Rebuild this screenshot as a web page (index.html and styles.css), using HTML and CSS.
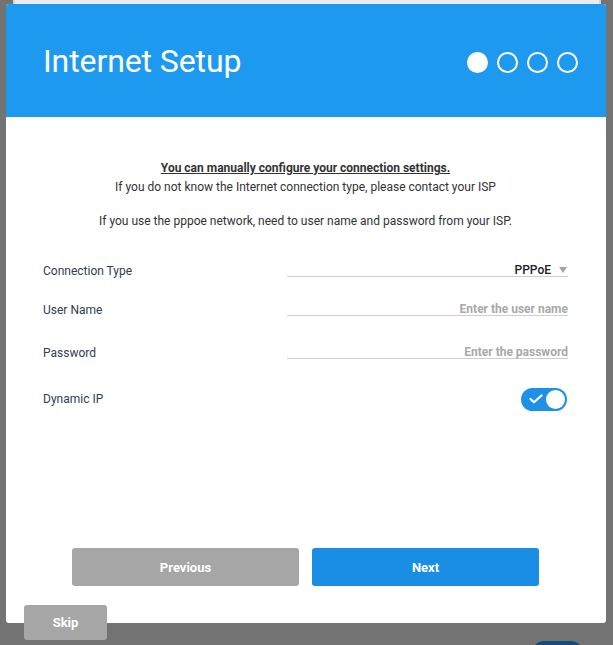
FILE: index.html
```html
<!DOCTYPE html>
<html lang="en">
<head>
  <meta charset="UTF-8">
  <title>Internet Setup</title>
  <link rel="stylesheet" href="styles.css">
</head>
<body>
  <div class="page-edge"></div>

  <div class="modal">
    <div class="modal-header">
      <h1 class="title">Internet Setup</h1>
      <div class="steps">
        <span class="step active"></span>
        <span class="step"></span>
        <span class="step"></span>
        <span class="step"></span>
      </div>
    </div>

    <div class="modal-body">
      <div class="intro">
        <p class="lead">You can manually configure your connection settings.</p>
        <p>If you do not know the Internet connection type, please contact your ISP</p>
        <p class="note">If you use the pppoe network, need to user name and password from your ISP.</p>
      </div>

      <div class="form">
        <div class="row row-type">
          <span class="label">Connection Type</span>
          <div class="field select">
            <span class="value">PPPoE</span>
            <span class="caret"></span>
          </div>
        </div>
        <div class="row row-user">
          <span class="label">User Name</span>
          <div class="field"><span class="placeholder">Enter the user name</span></div>
        </div>
        <div class="row row-pass">
          <span class="label">Password</span>
          <div class="field"><span class="placeholder">Enter the password</span></div>
        </div>
        <div class="row row-dyn">
          <span class="label">Dynamic IP</span>
          <div class="toggle on">
            <svg class="check" width="14" height="10" viewBox="0 0 14 10">
              <path d="M1.5 5 L5 8.2 L12.5 1.5" fill="none" stroke="#fff" stroke-width="2.2" stroke-linecap="round" stroke-linejoin="round"/>
            </svg>
            <span class="knob"></span>
          </div>
        </div>
      </div>

      <div class="actions">
        <button class="btn btn-grey">Previous</button>
        <button class="btn btn-blue">Next</button>
      </div>
    </div>
  </div>

  <button class="btn btn-grey skip">Skip</button>
  <div class="behind-toggle"></div>
</body>
</html>
```

FILE: styles.css
```css
body {
  margin: 0;
  height: 645px;
  overflow: hidden;
  background: #737373;
  font-family: "Roboto", "Liberation Sans", sans-serif;
  position: relative;
}

.page-edge {
  height: 4px;
  margin: 0 12px 0 13px;
  background: #ececec;
  border-left: 2px solid #d4d4d4;
  border-right: 2px solid #d4d4d4;
}

.modal {
  margin: 0 7px 0 6px;
  height: 619px;
  background: #fff;
  border-radius: 3px;
  overflow: hidden;
  display: flex;
  flex-direction: column;
}

.modal-header {
  height: 113px;
  flex: none;
  background: #1d9af0;
  display: flex;
  align-items: center;
  justify-content: space-between;
  padding: 0 28px 0 37px;
}

.title {
  margin: 0;
  color: #fff;
  font-size: 32px;
  font-weight: 400;
  letter-spacing: -0.1px;
}

.steps {
  display: flex;
  gap: 9px;
  margin-top: 4px;
}

.step {
  width: 17px;
  height: 17px;
  border: 2px solid #fff;
  border-radius: 50%;
}

.step.active {
  background: #fff;
}

.modal-body {
  flex: 1;
  display: flex;
  flex-direction: column;
  padding: 42px 38px 37px 37px;
}

.intro {
  text-align: center;
  font-size: 12px;
  line-height: 19px;
  color: #333;
}

.intro p {
  margin: 0;
}

.intro .lead {
  font-weight: 700;
  text-decoration: underline;
}

.intro .note {
  margin-top: 15px;
}

.form {
  margin-top: 28px;
}

.row {
  display: flex;
  align-items: center;
  justify-content: space-between;
  height: 24px;
}

.row-user { margin-top: 15px; }
.row-pass { margin-top: 19px; }
.row-dyn { margin-top: 22px; }

.label {
  font-size: 12px;
  color: #2f4050;
}

.field {
  width: 281px;
  height: 13px;
  line-height: 12px;
  border-bottom: 1px solid #cfcfcf;
  display: flex;
  justify-content: flex-end;
  align-items: center;
  font-size: 12px;
  margin-top: -2px;
}

.placeholder {
  color: #a9a9a9;
  font-weight: 700;
  font-size: 12px;
}

.value {
  color: #222;
  font-weight: 500;
}

.caret {
  width: 0;
  height: 0;
  border-left: 4px solid transparent;
  border-right: 4px solid transparent;
  border-top: 6px solid #a4a4a4;
  margin: 0 1px 0 8px;
}

.toggle {
  width: 46px;
  height: 23px;
  margin-right: 1px;
  border-radius: 12px;
  background: #1e90e8;
  display: flex;
  align-items: center;
  justify-content: space-between;
  padding: 0 2px 0 8px;
  box-sizing: border-box;
}

.knob {
  width: 19px;
  height: 19px;
  border-radius: 50%;
  background: #fff;
}

.actions {
  margin-top: auto;
  display: flex;
  justify-content: center;
  gap: 13px;
}

.btn {
  border: none;
  border-radius: 3px;
  color: #fff;
  font-family: inherit;
  font-size: 13px;
  font-weight: 700;
  cursor: pointer;
}

.actions .btn {
  width: 227px;
  height: 38px;
}

.btn-grey {
  background: #a6a6a6;
}

.btn-blue {
  background: #1a8ee5;
}

.skip {
  position: absolute;
  left: 24px;
  top: 605px;
  width: 83px;
  height: 35px;
  padding-bottom: 2px;
}

.behind-toggle {
  position: absolute;
  left: 532px;
  top: 641px;
  width: 51px;
  height: 24px;
  border-radius: 12px;
  background: #124d7e;
}
```
